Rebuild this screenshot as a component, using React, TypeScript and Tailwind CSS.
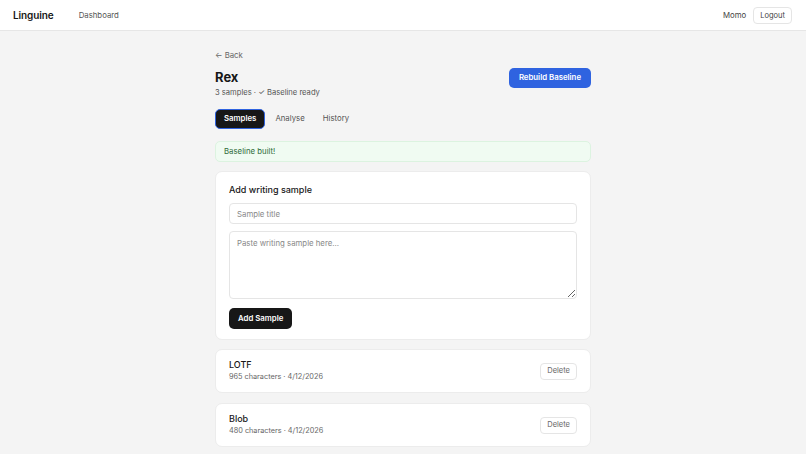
import React from "react";

const samples = [
  { title: "LOTF", meta: "965 characters · 4/12/2026" },
  { title: "Blob", meta: "480 characters · 4/12/2026" },
];

export default function App() {
  return (
    <div
      className="min-h-screen bg-[#f4f4f4] text-[#171717]"
      style={{ fontFamily: "Inter, 'Liberation Sans', sans-serif" }}
    >
      {/* Top nav */}
      <header className="flex h-[31px] items-center justify-between border-b border-[#e6e6e6] bg-white pl-[13px] pr-[14px] pt-[1px]">
        <div className="flex items-center gap-[25px]">
          <span className="text-[10px] font-semibold tracking-[-0.1px]">Linguine</span>
          <span className="text-[7.8px] text-[#555]">Dashboard</span>
        </div>
        <div className="flex items-center gap-[7px]">
          <span className="text-[7.8px] text-[#444]">Momo</span>
          <button className="h-[17px] rounded-[4px] border border-[#e5e5e5] bg-white px-[6px] text-[7.5px] text-[#444]">
            Logout
          </button>
        </div>
      </header>

      <main className="mx-auto w-[376px] pt-[19px]">
        <div className="text-[7.8px] text-[#666]">← Back</div>

        {/* Title row */}
        <div className="mt-[5px] flex items-start justify-between">
          <div>
            <h1 className="text-[13px] font-bold leading-[20px]">Rex</h1>
            <p className="text-[7.6px] text-[#555]">3 samples · ✓ Baseline ready</p>
          </div>
          <button className="mt-[1px] h-[20px] rounded-[5px] bg-[#2f63e0] px-[10px] text-[7.8px] font-semibold text-white">
            Rebuild Baseline
          </button>
        </div>

        {/* Tabs */}
        <div className="mt-[11px] flex items-center">
          <button className="h-[20px] rounded-[5px] border border-[#2f63e0] bg-[#171717] px-[8px] text-[7.8px] font-semibold text-white">
            Samples
          </button>
          <button className="h-[20px] px-[10px] text-[7.8px] text-[#555]">Analyse</button>
          <button className="h-[20px] px-[8px] text-[7.8px] text-[#555]">History</button>
        </div>

        {/* Alert */}
        <div className="mt-[12px] flex h-[21px] items-center rounded-[5px] border border-[#dcf3e0] bg-[#f0fbf2] px-[8px] text-[7.8px] text-[#2f6b3a]">
          Baseline built!
        </div>

        {/* Add sample card */}
        <section className="mt-[9px] rounded-[7px] border border-[#ececec] bg-white px-[13px] pb-[10px] pt-[12px]">
          <h2 className="text-[9px] font-medium leading-[12px]">Add writing sample</h2>
          <input
            className="mt-[7px] block h-[21px] w-full rounded-[4px] border border-[#e5e5e5] px-[7px] text-[7.8px] outline-none placeholder:text-[#888]"
            placeholder="Sample title"
          />
          <textarea
            className="mt-[7px] block h-[68px] w-full resize-y rounded-[4px] border border-[#e5e5e5] px-[7px] py-[6px] text-[7.8px] outline-none placeholder:text-[#888]"
            placeholder="Paste writing sample here..."
          />
          <button className="mt-[9px] h-[21px] rounded-[5px] bg-[#171717] px-[9px] text-[7.8px] font-semibold text-white">
            Add Sample
          </button>
        </section>

        {/* Samples list */}
        <div className="mt-[9px] flex flex-col gap-[10px]">
          {samples.map((s) => (
            <div
              key={s.title}
              className="flex h-[44px] items-center justify-between rounded-[7px] border border-[#ececec] bg-white px-[13px]"
            >
              <div>
                <div className="text-[9px] font-medium leading-[12px]">{s.title}</div>
                <div className="mt-[1px] text-[7.3px] text-[#666]">{s.meta}</div>
              </div>
              <button className="h-[17px] rounded-[4px] border border-[#e5e5e5] bg-white px-[6px] text-[7.5px] text-[#666]">
                Delete
              </button>
            </div>
          ))}
        </div>
      </main>
    </div>
  );
}
